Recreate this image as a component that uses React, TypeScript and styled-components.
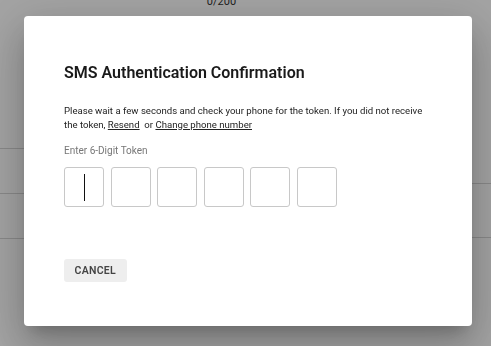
import styled, { createGlobalStyle } from 'styled-components';

const GlobalStyle = createGlobalStyle`
  html, body {
    margin: 0;
    padding: 0;
    background: #ffffff;
    font-family: Roboto, "Liberation Sans", Arial, sans-serif;
    overflow: hidden;
  }
`;

const Page = styled.div`
  width: 491px;
  height: 346px;
  background: #ffffff;
`;

const Counter = styled.div`
  margin-top: -4px;
  text-align: center;
  font-size: 11px;
  line-height: 12px;
  color: #333;
  padding-right: 48px;
`;

const Columns = styled.div`
  display: grid;
  grid-template-columns: 1fr 1fr;
`;

const Column = styled.div<{ $top: number }>`
  padding-top: ${p => p.$top}px;
`;

const Row = styled.div<{ $h: number }>`
  height: ${p => p.$h}px;
  border-top: 1px solid #d6d6d6;
`;

const Overlay = styled.div`
  position: fixed;
  inset: 0;
  background: rgba(0, 0, 0, 0.36);
  padding: 16px 19px 20px 24px;
`;

const Dialog = styled.div`
  width: 448px;
  height: 310px;
  box-sizing: border-box;
  background: #fff;
  border-radius: 4px;
  padding: 47px 40px 0 40px;
  box-shadow: 0 11px 15px -7px rgba(0, 0, 0, 0.2), 0 24px 38px 3px rgba(0, 0, 0, 0.14),
    0 9px 46px 8px rgba(0, 0, 0, 0.12);
`;

const Title = styled.h2`
  margin: 0;
  font-size: 16px;
  line-height: 20px;
  font-weight: 600;
  color: #1a1a1a;
`;

const Message = styled.p`
  margin: 21px 0 0;
  font-size: 9.6px;
  line-height: 13.5px;
  color: #222;
`;

const Link = styled.a`
  color: #222;
  text-decoration: underline;
  cursor: pointer;
`;

const Label = styled.div`
  margin-top: 14px;
  font-size: 10px;
  line-height: 12px;
  color: #777;
`;

const Boxes = styled.div`
  display: flex;
  gap: 6.5px;
  margin-top: 10px;
`;

const Box = styled.div`
  width: 40px;
  height: 40px;
  box-sizing: border-box;
  border: 1px solid #c8c8c8;
  border-radius: 3px;
  display: flex;
  align-items: center;
  justify-content: center;
`;

const Caret = styled.span`
  width: 1px;
  height: 27px;
  background: #111;
`;

const CancelButton = styled.button`
  margin-top: 52px;
  height: 23px;
  padding: 0 10.5px;
  border: none;
  border-radius: 3px;
  background: #eeeeee;
  color: #444;
  font-family: inherit;
  font-size: 10.5px;
  font-weight: 600;
  letter-spacing: 0.3px;
  text-transform: uppercase;
`;

export default function App() {
  return (
    <>
      <GlobalStyle />
      <Page>
        <Counter>0/200</Counter>
        <Columns>
          <Column $top={140}>
            <Row $h={44} />
            <Row $h={44} />
            <Row $h={44} />
          </Column>
          <Column $top={175}>
            <Row $h={53} />
            <Row $h={44} />
          </Column>
        </Columns>
      </Page>
      <Overlay>
        <Dialog>
          <Title>SMS Authentication Confirmation</Title>
          <Message>
            Please wait a few seconds and check your phone for the token. If you did not receive
            the token, <Link>Resend</Link>&nbsp; or <Link>Change phone number</Link>
          </Message>
          <Label>Enter 6-Digit Token</Label>
          <Boxes>
            {Array.from({ length: 6 }).map((_, i) => (
              <Box key={i}>{i === 0 && <Caret />}</Box>
            ))}
          </Boxes>
          <CancelButton>Cancel</CancelButton>
        </Dialog>
      </Overlay>
    </>
  );
}
